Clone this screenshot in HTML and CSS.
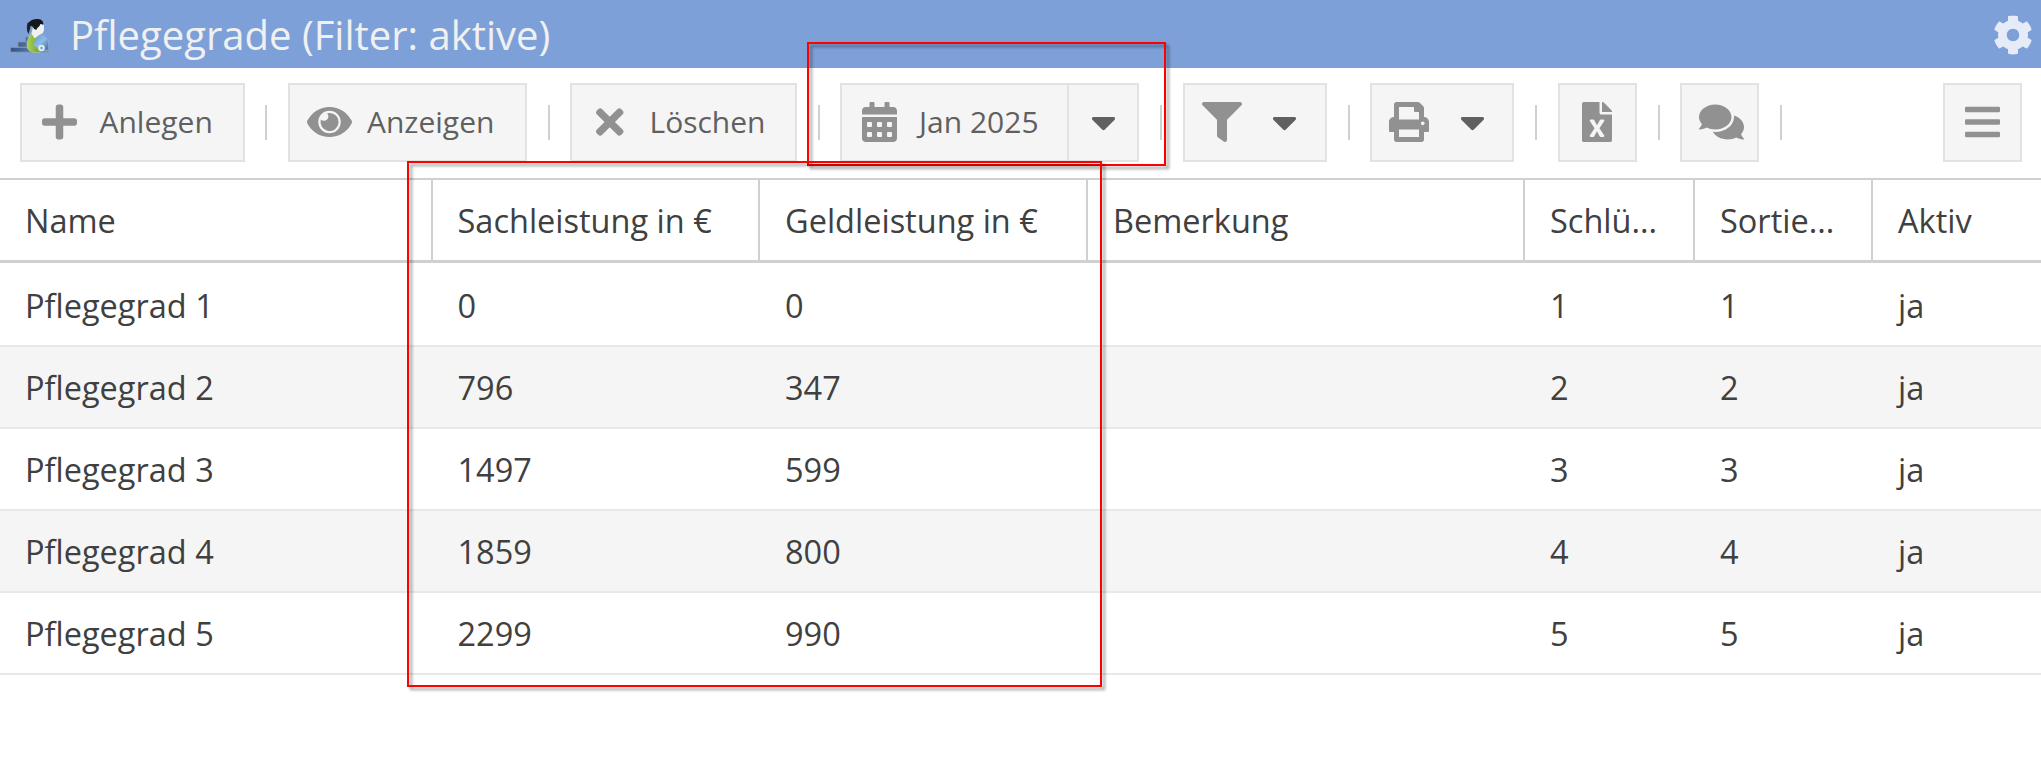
FILE: index.html
```html
<!DOCTYPE html>
<html lang="de">
<head>
<meta charset="utf-8">
<title>Pflegegrade</title>
<link rel="stylesheet" href="styles.css">
</head>
<body>
<header class="titlebar">
  <svg class="logo" viewBox="0 0 40 36">
    <defs>
      <linearGradient id="step" x1="0" x2="1"><stop offset="0" stop-color="#2f5288"/><stop offset="1" stop-color="#7299cc"/></linearGradient>
      <linearGradient id="dress" x1="0" x2="1"><stop offset="0" stop-color="#a9d552"/><stop offset="1" stop-color="#6c9d35"/></linearGradient>
      <linearGradient id="folder" x1="0" x2="1" y1="0" y2="1"><stop offset="0" stop-color="#5f97d0"/><stop offset=".5" stop-color="#8fbce8"/><stop offset="1" stop-color="#44688f"/></linearGradient>
    </defs>
    <g fill="url(#step)" stroke="#8a919c" stroke-width=".8">
      <path d="M15.500 19h8v5h-8zM8 24h12v5H8zM.5 29.500h38V34H.5z"/>
    </g>
    <path d="M22 15c-3 3-5 7-5 12 0 5 3 7 8 7.500h5l1-12-6-6z" fill="url(#dress)" stroke="#c3d8a4" stroke-width=".5"/>
    <path d="M23 7c0 4-1 6-1.500 8.500l3 5 5.500-4c3-.5 4-3 4-6V6z" fill="#f1f1ef"/>
    <path d="M22 6c-2 2-2 7-3.500 10-2-3-2-8-.8-11.500z" fill="#202228"/>
    <path d="M18 5.500C20 2 24 .8 28 1c4 .2 6 3 5.300 6.500-.6-1.500-1.500-1.500-3-1.500-.5 3-3 3-4 6-1.500-1-2.800-1-3.300-3-1.500-1-3-2-5-3.500z" fill="#15171b"/>
    <path d="M27.500 18.500L33 17l5.500 5v10h-8l-7-5z" fill="url(#folder)" stroke="#8ab3dc" stroke-width=".6"/>
    <circle cx="31.500" cy="30" r="3.300" fill="#dcebf8"/><circle cx="31.500" cy="30" r="1.200" fill="#6f9cc9"/>
  </svg>
  <h1 class="title">Pflegegrade (Filter: aktive)</h1>
  <svg class="cog" viewBox="0 0 512 512"><path d="M487.400 315.700l-42.600-24.600c4.300-23.200 4.300-47 0-70.200l42.600-24.600c4.900-2.800 7.100-8.600 5.500-14-11.100-35.600-30-67.800-54.700-94.600-3.800-4.100-10-5.100-14.800-2.300L380.800 110c-17.900-15.400-38.500-27.300-60.800-35.100V25.800c0-5.600-3.900-10.500-9.400-11.700-36.700-8.200-74.300-7.800-109.200 0-5.500 1.200-9.400 6.100-9.400 11.700V75c-22.200 7.900-42.800 19.800-60.800 35.100L88.700 85.500c-4.900-2.800-11-1.900-14.800 2.300-24.700 26.700-43.600 58.900-54.700 94.600-1.700 5.400.6 11.200 5.500 14L67.300 221c-4.300 23.200-4.300 47 0 70.200l-42.600 24.600c-4.900 2.800-7.100 8.600-5.500 14 11.100 35.600 30 67.800 54.700 94.600 3.800 4.100 10 5.100 14.800 2.300l42.600-24.600c17.900 15.400 38.500 27.300 60.800 35.100v49.200c0 5.600 3.900 10.500 9.400 11.700 36.700 8.200 74.300 7.800 109.200 0 5.500-1.200 9.400-6.100 9.400-11.700v-49.200c22.200-7.900 42.800-19.800 60.800-35.100l42.600 24.600c4.900 2.800 11 1.900 14.800-2.300 24.700-26.700 43.600-58.900 54.700-94.600 1.500-5.500-.7-11.300-5.600-14.100zM256 336c-44.100 0-80-35.900-80-80s35.900-80 80-80 80 35.900 80 80-35.900 80-80 80z"/></svg>
</header>

<nav class="toolbar">
  <button class="btn add"><svg class="icon" viewBox="0 0 448 512"><path d="M416 208H272V64c0-17.670-14.330-32-32-32h-32c-17.670 0-32 14.330-32 32v144H32c-17.670 0-32 14.330-32 32v32c0 17.670 14.330 32 32 32h144v144c0 17.670 14.330 32 32 32h32c17.670 0 32-14.330 32-32V304h144c17.670 0 32-14.330 32-32v-32c0-17.670-14.330-32-32-32z"/></svg><span>Anlegen</span></button>
  <i class="sep"></i>
  <button class="btn show"><svg class="icon" viewBox="0 0 576 512"><path d="M572.520 241.400C518.290 135.590 410.930 64 288 64S57.680 135.640 3.480 241.410a32.350 32.350 0 0 0 0 29.190C57.710 376.410 165.070 448 288 448s230.320-71.640 284.520-177.410a32.350 32.350 0 0 0 0-29.190zM288 400a144 144 0 1 1 144-144 143.930 143.930 0 0 1-144 144z"/><path d="M288 140a116 116 0 0 0-31 4.500 56 56 0 0 1-80 80A116 116 0 1 0 288 140z"/></svg><span>Anzeigen</span></button>
  <i class="sep"></i>
  <button class="btn del"><svg class="icon" viewBox="0 0 352 512"><path d="M242.720 256l100.070-100.070c12.280-12.280 12.280-32.190 0-44.480l-22.240-22.240c-12.280-12.280-32.190-12.280-44.480 0L176 189.280 75.930 89.210c-12.280-12.280-32.190-12.280-44.480 0L9.210 111.450c-12.280 12.280-12.280 32.190 0 44.480L109.280 256 9.210 356.070c-12.280 12.280-12.280 32.190 0 44.480l22.240 22.240c12.280 12.280 32.200 12.280 44.480 0L176 322.720l100.070 100.070c12.280 12.280 32.200 12.280 44.480 0l22.240-22.240c12.280-12.280 12.280-32.190 0-44.480L242.720 256z"/></svg><span>Löschen</span></button>
  <i class="sep"></i>
  <div class="split">
    <button class="btn month"><svg class="icon" viewBox="0 0 448 512"><path fill-rule="evenodd" d="M0 464c0 26.500 21.500 48 48 48h352c26.500 0 48-21.500 48-48V192H0v272zM332 256h40q12 0 12 12v40q0 12-12 12h-40q-12 0-12-12v-40q0-12 12-12zM332 384h40q12 0 12 12v40q0 12-12 12h-40q-12 0-12-12v-40q0-12 12-12zM204 256h40q12 0 12 12v40q0 12-12 12h-40q-12 0-12-12v-40q0-12 12-12zM204 384h40q12 0 12 12v40q0 12-12 12h-40q-12 0-12-12v-40q0-12 12-12zM76 256h40q12 0 12 12v40q0 12-12 12H76q-12 0-12-12v-40q0-12 12-12zM76 384h40q12 0 12 12v40q0 12-12 12H76q-12 0-12-12v-40q0-12 12-12zM400 64h-48V16c0-8.800-7.200-16-16-16h-32c-8.800 0-16 7.200-16 16v48H160V16c0-8.800-7.200-16-16-16h-32c-8.800 0-16 7.200-16 16v48H48C21.500 64 0 85.500 0 112v48h448v-48c0-26.500-21.500-48-48-48z"/></svg><span>Jan 2025</span></button>
    <button class="btn drop"><svg class="caret" viewBox="0 0 320 512"><path d="M31.300 192h257.300c17.800 0 26.700 21.500 14.100 34.100L174.100 354.700c-7.800 7.800-20.500 7.800-28.300 0L17.200 226.100C4.600 213.500 13.500 192 31.300 192z"/></svg></button>
  </div>
  <i class="sep"></i>
  <button class="btn filter"><svg class="icon" viewBox="0 0 512 512"><path d="M487.976 0H24.028C2.710 0-8.047 25.866 7.058 40.971L192 225.941V432c0 7.831 3.821 15.170 10.237 19.662l80 55.980C298.020 518.690 320 507.493 320 487.980V225.941l184.947-184.970C520.021 25.896 509.338 0 487.976 0z"/></svg><svg class="caret" viewBox="0 0 320 512"><path d="M31.300 192h257.300c17.800 0 26.700 21.500 14.100 34.100L174.100 354.700c-7.800 7.800-20.500 7.800-28.300 0L17.200 226.100C4.600 213.500 13.500 192 31.300 192z"/></svg></button>
  <i class="sep"></i>
  <button class="btn print"><svg class="icon" viewBox="0 0 512 512"><path d="M448 192V77.250c0-8.490-3.370-16.620-9.370-22.630L393.370 9.370c-6-6-14.140-9.370-22.630-9.370H96C78.330 0 64 14.330 64 32v160c-35.350 0-64 28.650-64 64v112c0 8.840 7.160 16 16 16h48v96c0 17.670 14.330 32 32 32h320c17.670 0 32-14.330 32-32v-96h48c8.840 0 16-7.160 16-16V256c0-35.350-28.650-64-64-64zm-64 256H128v-96h256v96zm0-224H128V64h192v48c0 8.840 7.160 16 16 16h48v96zm48 72c-13.250 0-24-10.750-24-24 0-13.260 10.750-24 24-24s24 10.740 24 24c0 13.250-10.750 24-24 24z"/></svg><svg class="caret" viewBox="0 0 320 512"><path d="M31.300 192h257.300c17.800 0 26.700 21.500 14.100 34.100L174.100 354.700c-7.800 7.800-20.500 7.800-28.300 0L17.200 226.100C4.600 213.500 13.500 192 31.300 192z"/></svg></button>
  <i class="sep"></i>
  <button class="btn excel"><svg class="icon" viewBox="0 0 384 512"><path d="M224 136V0H24C10.700 0 0 10.700 0 24v464c0 13.300 10.700 24 24 24h336c13.300 0 24-10.700 24-24V160H248c-13.200 0-24-10.800-24-24zm60.100 106.500L224 336l60.100 93.500c5.100 8-.6 18.500-10.100 18.500h-34.900c-4.400 0-8.500-2.400-10.600-6.300C208.900 405.500 192 373 192 373c-6.400 14.800-10 20-36.600 68.800-2.100 3.900-6.100 6.300-10.500 6.300H110c-9.500 0-15.200-10.500-10.100-18.500l60.300-93.500-60.300-93.500c-5.200-8 .6-18.500 10.100-18.500h34.800c4.400 0 8.500 2.400 10.600 6.300 26.100 48.800 20 33.600 36.600 68.500 0 0 6.100-11.700 36.600-68.500 2.100-3.900 6.200-6.300 10.600-6.300H274c9.500-.1 15.200 10.400 10.100 18.400zM384 121.900v6.100H256V0h6.100c6.400 0 12.500 2.500 17 7l97.900 98c4.500 4.500 7 10.600 7 16.900z"/></svg></button>
  <i class="sep"></i>
  <button class="btn chat"><svg class="icon" viewBox="0 0 576 512"><path d="M416 192c0-88.400-93.100-160-208-160S0 103.600 0 192c0 34.300 14.100 65.900 38 92-13.400 30.200-35.500 54.200-35.800 54.500-2.200 2.300-2.800 5.700-1.500 8.700S4.800 352 8 352c36.600 0 66.900-12.300 88.700-25 32.200 15.700 70.300 25 111.300 25 114.900 0 208-71.600 208-160zm122 220c23.900-26 38-57.700 38-92 0-66.900-53.500-124.200-129.300-148.100.9 6.600 1.300 13.300 1.300 20.100 0 105.900-107.700 192-240 192-10.800 0-21.300-.8-31.700-1.900C207.800 439.600 281.800 480 368 480c41 0 79.100-9.200 111.300-25 21.800 12.700 52.100 25 88.700 25 3.200 0 6.100-1.900 7.300-4.800 1.300-2.900.7-6.300-1.500-8.700-.3-.3-22.400-24.200-35.800-54.500z"/></svg></button>
  <i class="sep"></i>
  <button class="btn menu"><svg class="icon" viewBox="0 0 448 512"><rect y="60" width="448" height="72" rx="16"/><rect y="220" width="448" height="72" rx="16"/><rect y="380" width="448" height="72" rx="16"/></svg></button>
</nav>

<main class="grid">
  <div class="row head"><div>Name</div><div>Sachleistung in €</div><div>Geldleistung in €</div><div>Bemerkung</div><div>Schlü...</div><div>Sortie...</div><div>Aktiv</div></div>
  <div class="row"><div>Pflegegrad 1</div><div>0</div><div>0</div><div></div><div>1</div><div>1</div><div>ja</div></div>
  <div class="row alt"><div>Pflegegrad 2</div><div>796</div><div>347</div><div></div><div>2</div><div>2</div><div>ja</div></div>
  <div class="row"><div>Pflegegrad 3</div><div>1497</div><div>599</div><div></div><div>3</div><div>3</div><div>ja</div></div>
  <div class="row alt"><div>Pflegegrad 4</div><div>1859</div><div>800</div><div></div><div>4</div><div>4</div><div>ja</div></div>
  <div class="row"><div>Pflegegrad 5</div><div>2299</div><div>990</div><div></div><div>5</div><div>5</div><div>ja</div></div>
</main>

<div class="mark mark-month"></div>
<div class="mark mark-amounts"></div>
</body>
</html>
```
FILE: styles.css
```css
* { box-sizing: border-box; }
body {
  margin: 0;
  position: relative;
  width: 2041px;
  height: 771px;
  overflow: hidden;
  background: #fff;
  color: #404040;
  font-family: "Open Sans", sans-serif;
}
svg { display: block; flex: none; }

.titlebar {
  display: flex;
  align-items: center;
  height: 68px;
  padding: 0 8px 0 10px;
  background: #7da0d8;
}
.logo { width: 40px; height: 36px; margin-top: 3px; }
.title {
  flex: 1;
  margin: 0 0 0 20px;
  padding-top: 2px;
  color: #f0f0f0;
  font-size: 40px;
  font-weight: 400;
  line-height: 66px;
}
.cog { width: 40px; height: 40px; margin-top: 2px; fill: #e5ebf7; }

.toolbar {
  display: grid;
  grid-template-columns: 225px 43px 239px 43px 227px 43px 299px 44px 144px 43px 144px 44px 79px 43px 79px 1fr 79px;
  align-items: center;
  height: 112px;
  padding: 0 19px 1px 20px;
  border-bottom: 2px solid #d0d0d0;
}
.btn {
  display: flex;
  align-items: center;
  height: 79px;
  padding: 0 0 1px;
  border: 2px solid #e2e2e2;
  background: #f5f5f5;
  color: #606060;
  font: 400 30px/40px "Open Sans", sans-serif;
  white-space: nowrap;
}
.icon { height: 40px; fill: #919191; }
.caret { width: 25px; height: 40px; fill: #606060; }
.sep { width: 2px; height: 35px; margin-left: 21px; background: #d0d0d0; }
.add + .sep { margin-left: 20px; }

.add { gap: 22.5px; padding-left: 20px; }
.show { gap: 15px; padding-left: 17px; }
.del { gap: 26px; padding-left: 24px; }
.split { display: flex; }
.month { width: 229px; gap: 22px; padding-left: 20px; }
.drop { flex: 1; padding-left: 21.5px; border-left: 0; }
.filter { gap: 30px; padding-left: 17px; }
.print { gap: 30.5px; padding-left: 17px; }
.excel { padding-left: 22px; }
.chat { padding-left: 17px; }
.menu { padding-left: 19.5px; }

.row {
  display: grid;
  grid-template-columns: 433px 327px 328px 437px 170px 178px 1fr;
  height: 82px;
  border-bottom: 2px solid #e8e8e8;
  font-size: 32.5px;
  line-height: 82px;
}
.row > div { padding-left: 25px; white-space: nowrap; }
.row > div:nth-child(2) { padding-left: 24.5px; }
.head {
  height: 83px;
  border-bottom: 3px solid #d0d0d0;
}
.head > div { border-right: 2px solid #d0d0d0; }
.head > div:last-child { border-right: 0; }
.head + .row { height: 84px; line-height: 86px; }
.alt { background: #f5f5f5; }

/* highlight frames laid over the window */
.mark {
  position: absolute;
  border: 2px solid #f00;
  filter: drop-shadow(3px 3px 1.5px rgba(0, 0, 0, .4));
  pointer-events: none;
}
.mark-month { left: 807px; top: 42px; width: 359px; height: 124px; }
.mark-amounts { left: 407px; top: 161px; width: 695px; height: 526px; }
```
